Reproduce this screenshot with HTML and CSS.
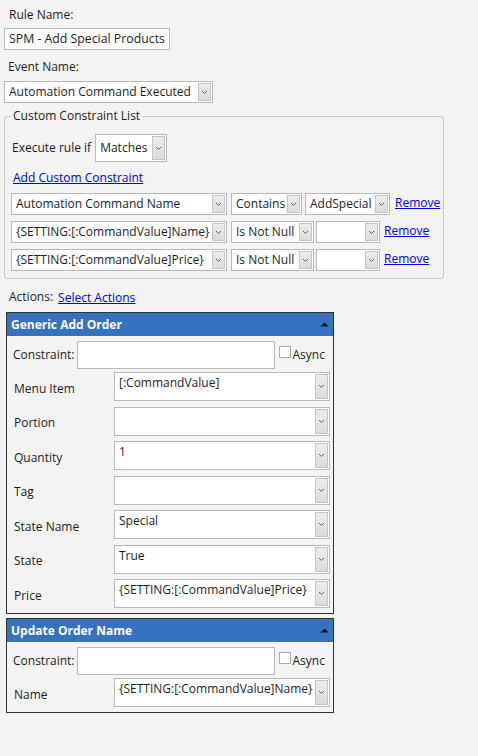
FILE: index.html
```html
<!DOCTYPE html>
<html>
<head>
<meta charset="utf-8">
<link rel="stylesheet" href="styles.css">
</head>
<body>
<div class="page">
  <div class="lbl top-lbl">Rule Name:</div>
  <div class="textbox rule-name">SPM - Add Special Products</div>
  <div class="lbl ev-lbl">Event Name:</div>
  <div class="combo event"><span class="val">Automation Command Executed</span><span class="arr"><svg width="7" height="5" viewBox="0 0 7 5"><path d="M1 1 L3.5 3.5 L6 1" fill="none" stroke="#666" stroke-width="1"/></svg></span></div>

  <div class="fieldset">
    <div class="legend">Custom Constraint List</div>
    <div class="exec-row">
      <span class="lbl">Execute rule if</span>
      <div class="combo matches"><span class="val">Matches</span><span class="arr"><svg width="7" height="5" viewBox="0 0 7 5"><path d="M1 1 L3.5 3.5 L6 1" fill="none" stroke="#666" stroke-width="1"/></svg></span></div>
    </div>
    <a class="link add-link" href="#">Add Custom Constraint</a>
    <div class="c-row">
      <div class="combo c1"><span class="val">Automation Command Name</span><span class="arr"><svg width="7" height="5" viewBox="0 0 7 5"><path d="M1 1 L3.5 3.5 L6 1" fill="none" stroke="#666" stroke-width="1"/></svg></span></div>
      <div class="combo c2a"><span class="val">Contains</span><span class="arr"><svg width="7" height="5" viewBox="0 0 7 5"><path d="M1 1 L3.5 3.5 L6 1" fill="none" stroke="#666" stroke-width="1"/></svg></span></div>
      <div class="combo c3a"><span class="val">AddSpecial</span><span class="arr"><svg width="7" height="5" viewBox="0 0 7 5"><path d="M1 1 L3.5 3.5 L6 1" fill="none" stroke="#666" stroke-width="1"/></svg></span></div>
      <a class="link rem" href="#">Remove</a>
    </div>
    <div class="c-row">
      <div class="combo c1"><span class="val">{SETTING:[:CommandValue]Name}</span><span class="arr"><svg width="7" height="5" viewBox="0 0 7 5"><path d="M1 1 L3.5 3.5 L6 1" fill="none" stroke="#666" stroke-width="1"/></svg></span></div>
      <div class="combo c2b"><span class="val">Is Not Null</span><span class="arr"><svg width="7" height="5" viewBox="0 0 7 5"><path d="M1 1 L3.5 3.5 L6 1" fill="none" stroke="#666" stroke-width="1"/></svg></span></div>
      <div class="combo c3b"><span class="val"></span><span class="arr"><svg width="7" height="5" viewBox="0 0 7 5"><path d="M1 1 L3.5 3.5 L6 1" fill="none" stroke="#666" stroke-width="1"/></svg></span></div>
      <a class="link rem" href="#">Remove</a>
    </div>
    <div class="c-row">
      <div class="combo c1"><span class="val">{SETTING:[:CommandValue]Price}</span><span class="arr"><svg width="7" height="5" viewBox="0 0 7 5"><path d="M1 1 L3.5 3.5 L6 1" fill="none" stroke="#666" stroke-width="1"/></svg></span></div>
      <div class="combo c2b"><span class="val">Is Not Null</span><span class="arr"><svg width="7" height="5" viewBox="0 0 7 5"><path d="M1 1 L3.5 3.5 L6 1" fill="none" stroke="#666" stroke-width="1"/></svg></span></div>
      <div class="combo c3b"><span class="val"></span><span class="arr"><svg width="7" height="5" viewBox="0 0 7 5"><path d="M1 1 L3.5 3.5 L6 1" fill="none" stroke="#666" stroke-width="1"/></svg></span></div>
      <a class="link rem" href="#">Remove</a>
    </div>
  </div>

  <div class="actions-row"><span class="lbl">Actions:</span><a class="link" href="#">Select Actions</a></div>

  <div class="panel">
    <div class="p-head"><span>Generic Add Order</span><svg width="9" height="5" viewBox="0 0 9 5"><path d="M0.5 4.5 L4.5 0.5 L8.5 4.5 Z" fill="#111"/></svg></div>
    <div class="p-body">
      <div class="cons-row">
        <span class="lbl">Constraint:</span>
        <div class="textbox cons"></div>
        <span class="chk"></span><span class="lbl">Async</span>
      </div>
      <div class="f-row"><span class="lbl f-lbl">Menu Item</span><div class="combo f-combo"><span class="val">[:CommandValue]</span><span class="arr"><svg width="7" height="5" viewBox="0 0 7 5"><path d="M1 1 L3.5 3.5 L6 1" fill="none" stroke="#666" stroke-width="1"/></svg></span></div></div>
      <div class="f-row"><span class="lbl f-lbl">Portion</span><div class="combo f-combo"><span class="val"></span><span class="arr"><svg width="7" height="5" viewBox="0 0 7 5"><path d="M1 1 L3.5 3.5 L6 1" fill="none" stroke="#666" stroke-width="1"/></svg></span></div></div>
      <div class="f-row"><span class="lbl f-lbl">Quantity</span><div class="combo f-combo"><span class="val">1</span><span class="arr"><svg width="7" height="5" viewBox="0 0 7 5"><path d="M1 1 L3.5 3.5 L6 1" fill="none" stroke="#666" stroke-width="1"/></svg></span></div></div>
      <div class="f-row"><span class="lbl f-lbl">Tag</span><div class="combo f-combo"><span class="val"></span><span class="arr"><svg width="7" height="5" viewBox="0 0 7 5"><path d="M1 1 L3.5 3.5 L6 1" fill="none" stroke="#666" stroke-width="1"/></svg></span></div></div>
      <div class="f-row"><span class="lbl f-lbl">State Name</span><div class="combo f-combo"><span class="val">Special</span><span class="arr"><svg width="7" height="5" viewBox="0 0 7 5"><path d="M1 1 L3.5 3.5 L6 1" fill="none" stroke="#666" stroke-width="1"/></svg></span></div></div>
      <div class="f-row"><span class="lbl f-lbl">State</span><div class="combo f-combo"><span class="val">True</span><span class="arr"><svg width="7" height="5" viewBox="0 0 7 5"><path d="M1 1 L3.5 3.5 L6 1" fill="none" stroke="#666" stroke-width="1"/></svg></span></div></div>
      <div class="f-row"><span class="lbl f-lbl">Price</span><div class="combo f-combo"><span class="val">{SETTING:[:CommandValue]Price}</span><span class="arr"><svg width="7" height="5" viewBox="0 0 7 5"><path d="M1 1 L3.5 3.5 L6 1" fill="none" stroke="#666" stroke-width="1"/></svg></span></div></div>
    </div>
  </div>

  <div class="panel">
    <div class="p-head"><span>Update Order Name</span><svg width="9" height="5" viewBox="0 0 9 5"><path d="M0.5 4.5 L4.5 0.5 L8.5 4.5 Z" fill="#111"/></svg></div>
    <div class="p-body">
      <div class="cons-row">
        <span class="lbl">Constraint:</span>
        <div class="textbox cons"></div>
        <span class="chk"></span><span class="lbl">Async</span>
      </div>
      <div class="f-row"><span class="lbl f-lbl">Name</span><div class="combo f-combo"><span class="val">{SETTING:[:CommandValue]Name}</span><span class="arr"><svg width="7" height="5" viewBox="0 0 7 5"><path d="M1 1 L3.5 3.5 L6 1" fill="none" stroke="#666" stroke-width="1"/></svg></span></div></div>
    </div>
  </div>
</div>
</body>
</html>
```
FILE: styles.css
```css
* { box-sizing: border-box; }
html, body { margin: 0; padding: 0; }
body {
  background: #f3f3f3;
  font-family: "Open Sans", "Noto Sans", sans-serif;
  font-size: 12px;
  color: #1e1e1e;
  width: 478px;
  height: 756px;
  overflow: hidden;
}
.page { padding: 0 0 0 4px; }
.lbl { white-space: nowrap; line-height: 16px; }
.top-lbl { padding: 7px 0 0 5px; height: 28px; }
.ev-lbl { padding: 9px 0 0 4px; height: 31px; }
.textbox {
  background: #fff;
  border: 1px solid #b9b9b9;
  height: 22px;
  line-height: 20px;
  padding: 0 4px;
  white-space: nowrap;
}
.rule-name { width: 166px; font-size: 12.3px; }
.combo {
  display: flex;
  background: #fff;
  border: 1px solid #b9b9b9;
  height: 22px;
  align-items: stretch;
}
.combo .val {
  flex: 1;
  padding: 0 4px;
  line-height: 20px;
  white-space: nowrap;
  overflow: hidden;
}
.combo .arr {
  width: 13px;
  margin: 1px 1px 1px 0;
  border: 1px solid #c4c4c4;
  background: linear-gradient(#ececec, #dcdcdc);
  display: flex;
  align-items: center;
  justify-content: center;
}
.event { width: 209px; height: 22px; }
.fieldset {
  margin-top: 13px;
  width: 440px;
  border: 1px solid #c8c8c8;
  border-radius: 3px;
  padding: 0 0 6px 6px;
  height: 163px;
}
.legend {
  display: block;
  width: max-content;
  margin: -9px 0 0 0;
  padding: 0 2px;
  background: #f3f3f3;
  line-height: 16px;
  height: 16px;
}
.exec-row {
  display: flex;
  align-items: center;
  margin-top: 10px;
  gap: 4px;
  padding-left: 1px;
}
.matches { width: 72px; height: 28px; }
.matches .val { line-height: 26px; }
.link { color: #0000ee; text-decoration: underline; white-space: nowrap; }
.add-link { display: block; width: max-content; margin: 7px 0 0 2px; line-height: 18px; height: 24px; }
.c-row {
  display: flex;
  align-items: center;
  height: 22px;
  margin-bottom: 6px;
}
.c1 { width: 216px; margin-right: 4px; }
.c2a { width: 71px; margin-right: 3px; }
.c3a { width: 85px; margin-right: 5px; }
.c2b { width: 83px; margin-right: 2px; }
.c3b { width: 64px; margin-right: 4px; }
.rem { line-height: 16px; margin-top: -2px; }
.actions-row {
  display: flex;
  gap: 5px;
  padding: 10px 0 0 5px;
  height: 33px;
  align-items: flex-start;
}
.panel {
  width: 328px;
  margin-left: 2px;
  border: 1px solid #333;
  margin-bottom: 4px;
}
.p-head {
  background: #3672c2;
  color: #fff;
  font-weight: bold;
  height: 23px;
  display: flex;
  align-items: center;
  justify-content: space-between;
  padding: 0 4px 0 4px;
}
.p-head svg { margin-bottom: 1px; }
.p-body { padding: 5px 3px 5px 6px; }
.cons-row {
  display: flex;
  align-items: center;
  height: 28px;
  margin-bottom: 3px;
}
.cons { width: 198px; height: 28px; margin-left: 2px; }
.chk {
  width: 12px; height: 12px;
  border: 1px solid #aaa;
  background: #fff;
  margin: -6px 2px 0 4px;
}
.f-row {
  display: flex;
  align-items: center;
  height: 29px;
  margin-bottom: 5.5px;
}
.f-row:last-child { margin-bottom: 0; }
.f-lbl { width: 101px; padding-left: 1px; padding-top: 4px; }
.f-combo { width: 216px; height: 29px; }
.f-combo .val { line-height: 20px; }
```
